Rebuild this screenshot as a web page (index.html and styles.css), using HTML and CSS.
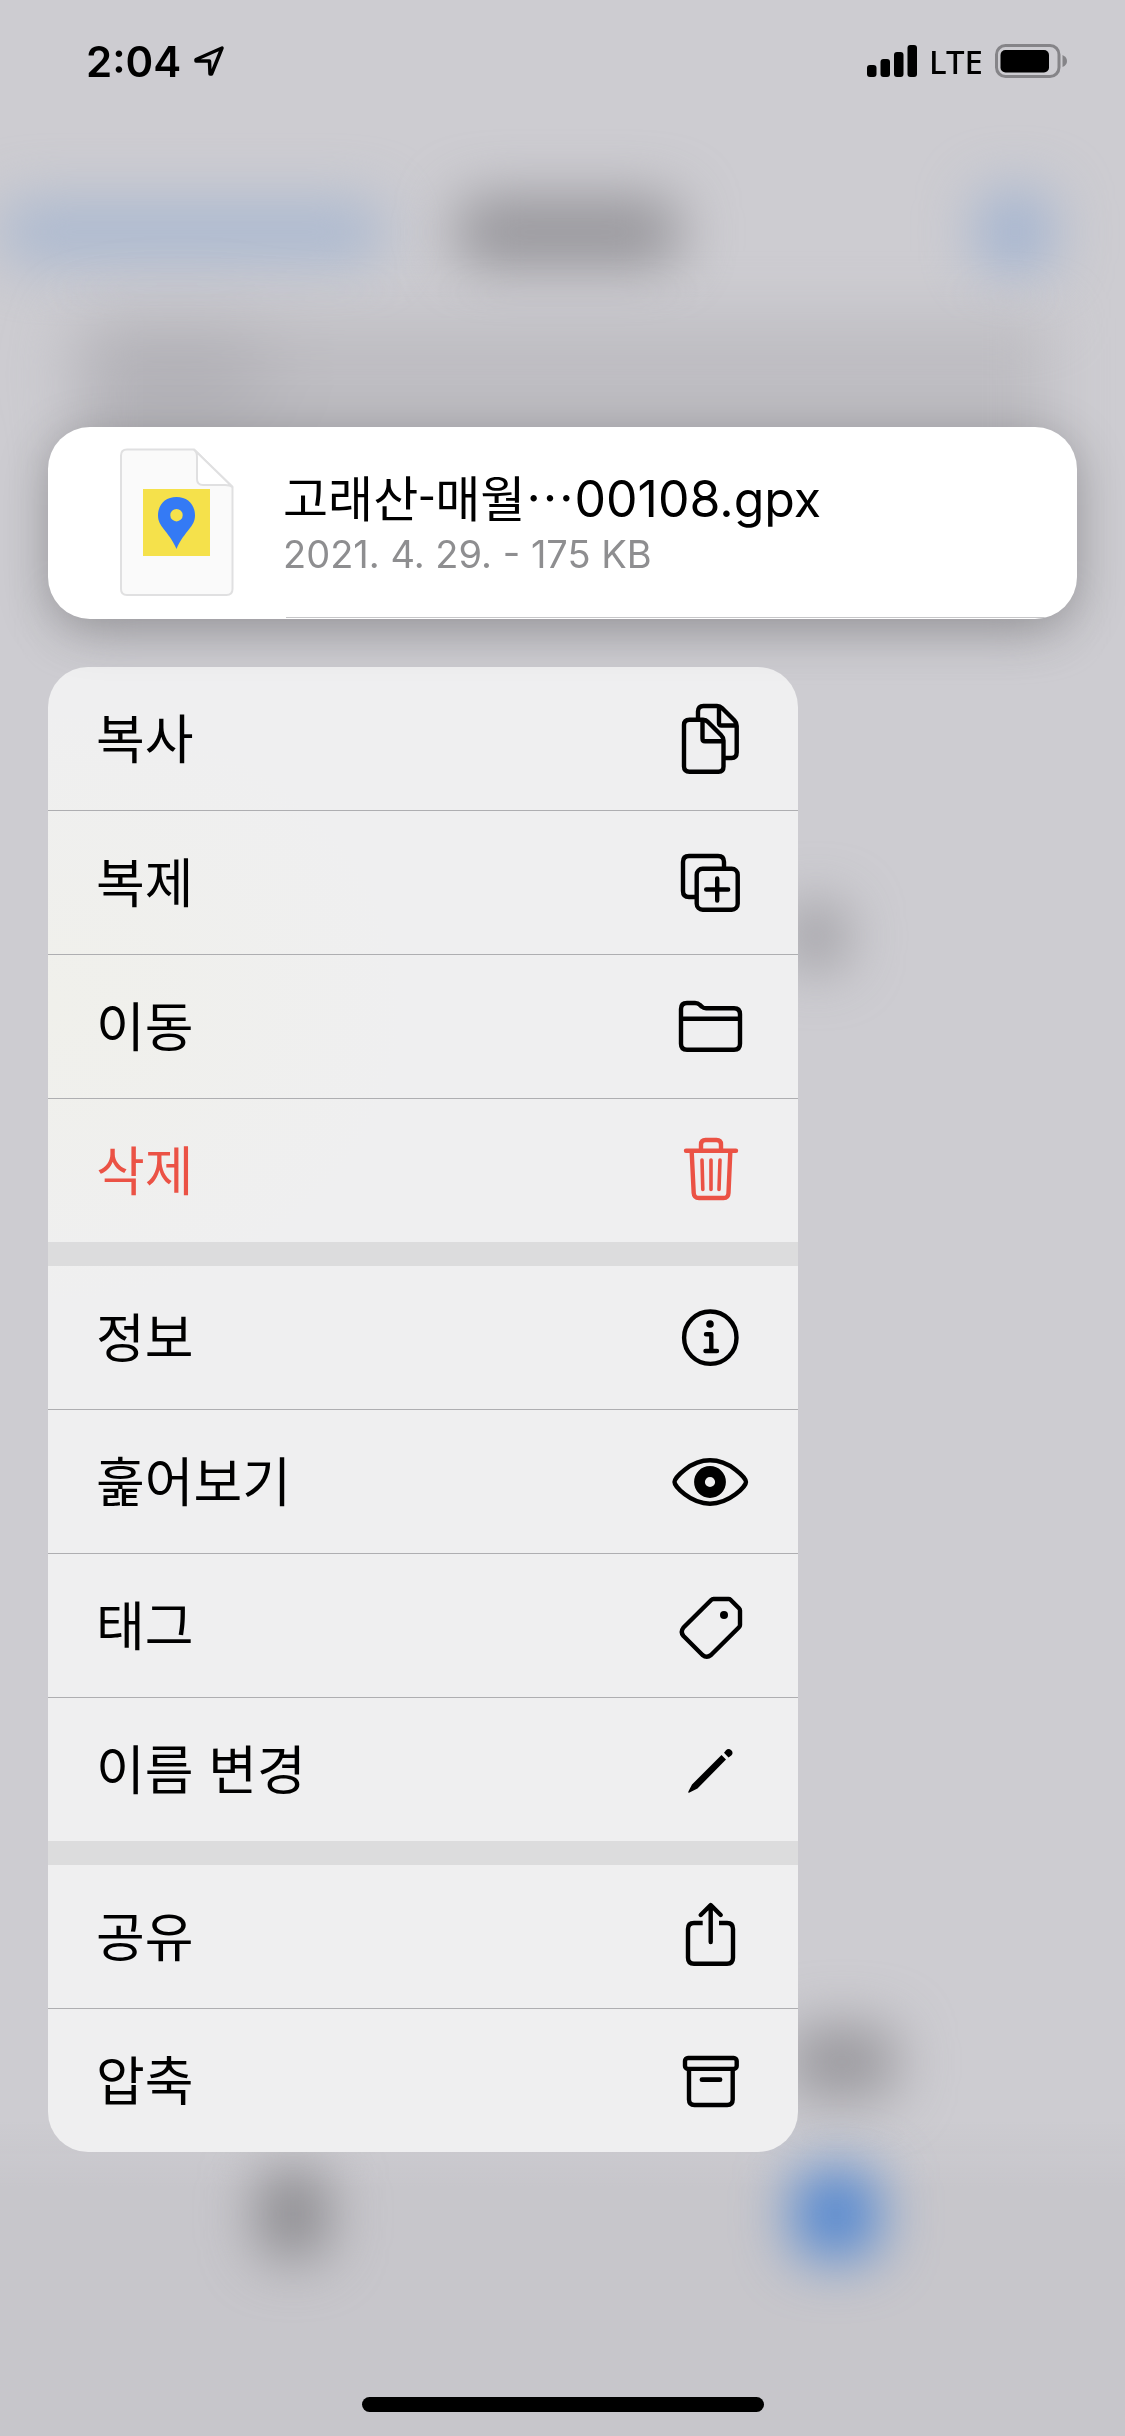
FILE: index.html
```html
<!DOCTYPE html>
<html lang="ko">
<head>
<meta charset="utf-8">
<meta name="viewport" content="width=device-width, initial-scale=1">
<title>파일</title>
<link rel="stylesheet" href="styles.css">
</head>
<body>
<div class="backdrop" aria-hidden="true">
  <div class="blur-header">
    <span class="blob back"></span><span class="blob heading"></span><span class="blob more"></span>
  </div>
  <div class="blur-search"><span class="blob query"></span></div>
  <div class="blur-content">
    <span class="blob upper"></span><span class="blob lower"></span>
  </div>
  <div class="blur-tabs"><span class="blob recent"></span><span class="blob browse"></span></div>
</div>

<div class="screen">
  <header class="status">
    <div class="status-left">
      <time>2:04</time>
      <svg class="location" width="32" height="32" viewBox="0 0 32 32" aria-hidden="true"><path d="M29 3 18.500 29H17L16.500 16H3V14.500Z"/></svg>
    </div>
    <div class="status-right">
      <svg width="50" height="32" viewBox="0 0 50 32" aria-hidden="true"><rect x="0" y="20" width="9.500" height="12" rx="3"/><rect x="13.500" y="14" width="9.500" height="18" rx="3"/><rect x="27" y="7" width="9.500" height="25" rx="3"/><rect x="40.500" y="0" width="9.500" height="32" rx="3"/></svg>
      <span class="network">LTE</span>
      <svg width="72" height="34" viewBox="0 0 72 34" aria-hidden="true"><rect x="1.500" y="1.500" width="62.500" height="31" rx="9" fill="none" stroke="#858488" stroke-width="3"/><rect x="5.500" y="6" width="48.500" height="22.500" rx="5"/><path d="M67.500 11Q72 13 72 17T67.500 23Z" fill="#858488"/></svg>
    </div>
  </header>

  <main>
    <article class="file">
      <svg class="document" width="114" height="148" viewBox="0 0 114 148" aria-hidden="true">
        <path d="M7 1.500H74L112.500 39V141Q112.500 147 106.500 147H7Q1 147 1 141V7.500Q1 1.500 7 1.500Z" fill="#fafafa" stroke="#e0e0e1" stroke-width="2"/>
        <path d="M74 1.500 Q77 4 77 9V31Q77 37 83 37H105Q110 37 112.500 39Z" fill="#fff" stroke="#e0e0e1" stroke-width="2"/>
        <path d="M23 41H90V108H23Z" fill="#f5e14b"/>
        <path d="M56.500 49C45 49 38 57 38 67.500C38 79 48 82 56.500 101C65 82 75 79 75 67.500C75 57 68 49 56.500 49ZM56.500 61A6.200 6.200 0 1 1 56.500 73.400A6.200 6.200 0 1 1 56.500 61Z" fill="#347af5" fill-rule="evenodd"/>
      </svg>
      <div class="file-text">
        <h1><span class="hangul">고래산-매월⋯</span>00108.gpx</h1>
        <p>2021. 4. 29. - 175 KB</p>
      </div>
    </article>

    <div class="menu" role="menu">
      <div class="group">
        <button type="button" role="menuitem"><span>복사</span>
          <svg class="icon" viewBox="0 0 81 81" aria-hidden="true"><path d="M29 20V13.500Q29 8 34.500 8H48Q51 8 53 10L65.500 22.500Q67.700 24.700 67.700 28V54.500Q67.700 60 62.500 60H56M50 9V25Q50 27.500 52.500 27.500H67M20 21.700H34Q37 21.700 39 24L52 37Q54.500 39.500 54.500 42.500V68.500Q54.500 73.700 49.500 73.700H20.500Q15 73.700 15 68.500V27Q15 21.700 20.500 21.700M33.500 23V40.500Q33.500 43.300 36 43.300H54"/></svg>
        </button>
        <button type="button" role="menuitem"><span>복제</span>
          <svg class="icon" viewBox="0 0 81 81" aria-hidden="true"><path d="M27 55H20Q14 55 14 49V20Q14 14 20 14H49Q55 14 55 20V26M48.200 36.500V58.500M37.200 47.500H59.200"/><rect x="27.700" y="26.700" width="41" height="41" rx="6"/></svg>
        </button>
        <button type="button" role="menuitem"><span>이동</span>
          <svg class="icon" viewBox="0 0 81 81" aria-hidden="true"><path d="M18 17H26Q29 17 31 19L33 20.800Q34.500 22.300 37 22.300H65Q71 22.300 71 28.300V57.700Q71 63.700 65 63.700H18Q12 63.700 12 57.700V23Q12 17 18 17ZM12 32.700H71"/></svg>
        </button>
        <button type="button" role="menuitem" class="danger"><span>삭제</span>
          <svg class="icon" viewBox="0 0 81 81" aria-hidden="true"><path d="M17 20.700H67M32 20V14.500Q32 10 36.500 10H47.500Q52 10 52 14.500V20M22.700 22 24.700 63Q25 68 30 68H54.500Q59.300 68 59.500 63L61.300 22"/><path stroke-width="3.600" d="M33 30 33.800 59.500M42 30V59.500M51 30 50 59.500"/></svg>
        </button>
      </div>
      <div class="group">
        <button type="button" role="menuitem"><span>정보</span>
          <svg class="icon" viewBox="0 0 81 81" aria-hidden="true"><circle cx="41.300" cy="40.700" r="26.200"/><circle class="solid" cx="41" cy="27" r="3.800"/><path d="M37 37.300H42.300V53M36.500 54H48"/></svg>
        </button>
        <button type="button" role="menuitem"><span>훑어보기</span>
          <svg class="icon" viewBox="0 0 81 81" aria-hidden="true"><path d="M5.500 41C5.500 37 21 19.300 41 19.300S77 37 77 41 61 62.700 41 62.700 5.500 45 5.500 41Z"/><circle cx="41" cy="41" r="10.500" stroke-width="10.800"/></svg>
        </button>
        <button type="button" role="menuitem"><span>태그</span>
          <svg class="icon" viewBox="0 0 81 81" aria-hidden="true"><path d="M44.500 14H59.500Q60.700 14 61.500 14.800L70 23.300Q71 24.300 71 25.500V40Q71 41.200 70 42.200L42 70Q37.800 73.500 33.500 70L14.500 51Q11 47 14.500 42.500L42.200 15Q43.200 14 44.500 14Z"/><circle class="solid" cx="55" cy="30" r="4"/></svg>
        </button>
        <button type="button" role="menuitem"><span>이름 변경</span>
          <svg class="icon" viewBox="0 0 81 81" aria-hidden="true"><path class="solid" d="M52.500 26 57 30.500 28.500 59.500 20.500 63.500Q18.800 64.200 19.500 62.300L23 55.500ZM55 23.700 57 21.300Q59.500 18.800 62.300 21.300 64.800 24 62.300 26.500L59.500 28.500Z"/></svg>
        </button>
      </div>
      <div class="group">
        <button type="button" role="menuitem"><span>공유</span>
          <svg class="icon" viewBox="0 0 81 81" aria-hidden="true"><path stroke-linecap="butt" d="M33.700 27H25Q19 27 19 33V61.700Q19 67.700 25 67.700H58Q64 67.700 64 61.700V33Q64 27 58 27H50"/><path d="M41.700 46V9.500M31.700 19 41.700 9 51.700 19"/></svg>
        </button>
        <button type="button" role="menuitem"><span>압축</span>
          <svg class="icon" viewBox="0 0 81 81" aria-hidden="true"><rect x="16" y="18" width="51.700" height="10.900" rx="3"/><path d="M20 30V59.500Q20 65 25.500 65H58.200Q63.700 65 63.700 59.500V30"/><path stroke-width="4.800" d="M33 39.700H51"/></svg>
        </button>
      </div>
    </div>
  </main>

  <footer><span class="home-bar"></span></footer>
</div>
</body>
</html>
```
FILE: styles.css
```css
* { box-sizing: border-box; }

body {
  margin: 0;
  color: #000;
  background: #cdccd1;
  font-family: "Inter", "Noto Sans CJK KR", sans-serif;
}

/* Defocused file browser behind the menu */
.backdrop {
  position: fixed;
  inset: 0;
  z-index: -1;
  display: flex;
  flex-direction: column;
  overflow: hidden;
}

.blob {
  flex: none;
  border-radius: 24px;
  background: #97969b;
  filter: blur(28px);
}

.blur-header {
  display: flex;
  align-items: center;
  gap: 72px;
  padding: 190px 72px 0 0;
}
.back { width: 384px; height: 64px; background: #abb9d0; }
.heading { width: 224px; height: 72px; }
.more { width: 76px; height: 84px; margin-left: auto; background: #a3b4d0; }

.blur-search {
  height: 300px;
  margin: 44px 76px 0;
  background: #bebdc2;
  filter: blur(28px);
}
.query { display: block; width: 170px; height: 72px; background: #adacb2; margin: 20px 16px; }

.blur-content {
  flex: 1;
  display: flex;
  flex-direction: column;
  justify-content: space-between;
  padding: 286px 0 24px 70%;
}
.upper { width: 56px; height: 64px; }
.lower { width: 108px; height: 72px; }

.blur-tabs {
  display: flex;
  justify-content: space-between;
  height: 314px;
  padding: 48px 22% 0 23%;
  background: linear-gradient(transparent, #c7c6cb 64px);
}
.recent { width: 68px; height: 88px; background: #88878b; }
.browse { width: 84px; height: 88px; background: #4f85d0; }

.screen {
  display: flex;
  flex-direction: column;
  min-height: 100vh;
}

.status {
  display: flex;
  justify-content: space-between;
  align-items: center;
  height: 122px;
  padding: 0 58px 0 86px;
}
.status-left, .status-right { display: flex; align-items: center; }
.status-left { gap: 12px; }
.status-right { gap: 12px; }
.status time { font-size: 42px; font-weight: 600; }
.network { font: 500 33px "Noto Sans", sans-serif; }
.location {
  fill: none;
  stroke: #000;
  stroke-width: 3.5;
  stroke-linejoin: round;
}

main { flex: 1; padding: 305px 48px 0; }

.file {
  position: relative;
  display: flex;
  gap: 49px;
  height: 192px;
  padding: 21px 72px 0;
  overflow: hidden;
  border-radius: 42px;
  background: #fff;
  box-shadow: 0 10px 50px rgba(0, 0, 0, .26);
}
.file::after {
  content: "";
  position: absolute;
  left: 238px;
  right: 0;
  bottom: 1px;
  height: 1px;
  background: #c6c6c8;
}
.file-text { padding-top: 18px; }
h1 {
  margin: 0;
  font-size: 50px;
  font-weight: 400;
  line-height: 60px;
  white-space: nowrap;
}
.hangul { font-family: "Noto Sans CJK KR", sans-serif; font-size: 49px; }
.file p {
  margin: 0;
  color: #8e8e90;
  font-size: 38px;
  line-height: 50px;
}

.menu {
  width: 750px;
  max-width: 100%;
  margin-top: 48px;
  overflow: hidden;
  border-radius: 40px;
  background: radial-gradient(ellipse 360px 300px at 0 340px, #f0f0eb, transparent), #efeff0;
}
.group + .group { border-top: 24px solid #dcdcdd; }

.menu button {
  display: flex;
  justify-content: space-between;
  align-items: center;
  width: 100%;
  height: 143px;
  padding: 0 48px;
  border: 0;
  background: none;
  color: #000;
  font: 400 53px/72px "Noto Sans CJK KR", sans-serif;
  text-align: left;
}
.menu button + button { height: 144px; border-top: 1px solid #aeaeb1; }
.menu button span { padding-bottom: 6px; }
.menu .danger { color: #eb5245; }

.icon {
  width: 81px;
  height: 81px;
  fill: none;
  stroke: currentColor;
  stroke-width: 4.4;
  stroke-linecap: round;
  stroke-linejoin: round;
}
.icon .solid { fill: currentColor; stroke: none; }

footer { display: flex; justify-content: center; padding: 24px; }
.home-bar {
  width: 402px;
  height: 15px;
  border-radius: 8px;
  background: #000;
}
```
